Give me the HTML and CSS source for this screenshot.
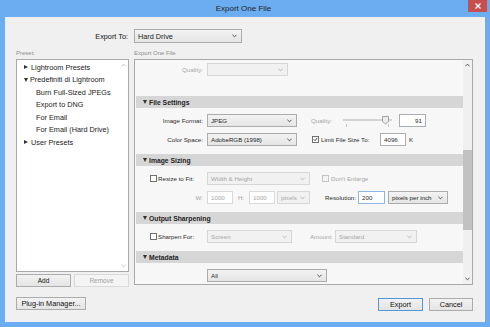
FILE: index.html
```html
<!DOCTYPE html>
<html lang="en">
<head>
    <meta charset="UTF-8">
    <title>Export One File</title>
    <link rel="stylesheet" href="styles.css">
</head>
<body>
    <div class="window">
        <div class="titlebar">
            <span class="title">Export One File</span>
            <span class="close">
                <svg width="6" height="6" viewBox="0 0 6 6"><path d="M0.5 0.5 L5.5 5.5 M5.5 0.5 L0.5 5.5" stroke="#fff" stroke-width="1.3"/></svg>
            </span>
        </div>

        <div class="client">
            <div class="export-to">
                <span class="export-label">Export To:</span>
                <div class="select select-dest">
                    <span>Hard Drive</span>
                    <svg class="caret" viewBox="0 0 6 4"><path d="M0.5 0.5 L3 3 L5.5 0.5"/></svg>
                </div>
            </div>

            <div class="captions">
                <span class="caption-preset">Preset:</span>
                <span>Export One File</span>
            </div>

            <div class="main">
                <!-- presets -->
                <div class="presets">
                    <div class="preset-list">
                        <div class="tree">
                            <div class="tree-row"><span class="tri-right"></span>Lightroom Presets</div>
                            <div class="tree-row"><span class="tri-down"></span>Predefiniti di Lightroom</div>
                            <div class="tree-row tree-leaf">Burn Full-Sized JPEGs</div>
                            <div class="tree-row tree-leaf">Export to DNG</div>
                            <div class="tree-row tree-leaf">For Email</div>
                            <div class="tree-row tree-leaf">For Email (Hard Drive)</div>
                            <div class="tree-row"><span class="tri-right"></span>User Presets</div>
                        </div>
                        <div class="vscroll vscroll-list">
                            <div class="sb-arrow"><svg viewBox="0 0 6 4"><path d="M0.5 3.5 L3 1 L5.5 3.5"/></svg></div>
                            <div class="sb-track"></div>
                            <div class="sb-arrow"><svg viewBox="0 0 6 4"><path d="M0.5 0.5 L3 3 L5.5 0.5"/></svg></div>
                        </div>
                    </div>
                    <div class="preset-buttons">
                        <button class="btn">Add</button>
                        <button class="btn btn-off">Remove</button>
                    </div>
                </div>

                <!-- settings panel -->
                <div class="panel">
                    <div class="panel-body">
                        <div class="row">
                            <span class="label off">Quality:</span>
                            <div class="select off sel-quality"><span></span><svg class="caret" viewBox="0 0 6 4"><path d="M0.5 0.5 L3 3 L5.5 0.5"/></svg></div>
                        </div>

                        <div class="sect sect-first"><span class="tri-down"></span>File Settings</div>
                        <div class="row">
                            <span class="label">Image Format:</span>
                            <div class="select sel-format"><span>JPEG</span><svg class="caret" viewBox="0 0 6 4"><path d="M0.5 0.5 L3 3 L5.5 0.5"/></svg></div>
                            <span class="side-label off quality-label">Quality:</span>
                            <svg class="slider" width="49" height="12" viewBox="0 0 49 12">
                                <rect x="0" y="4" width="49" height="2" fill="#d4d4d4"/>
                                <path d="M3.5 9 V12 M45.5 9 V12" stroke="#c4c4c4"/>
                                <path d="M39.5 1.5 H45.5 V6.5 L42.5 9 L39.5 6.5 Z" fill="#ececec" stroke="#a2a2a2"/>
                            </svg>
                            <div class="input input-quality">91</div>
                        </div>
                        <div class="row">
                            <span class="label">Color Space:</span>
                            <div class="select sel-format"><span>AdobeRGB (1998)</span><svg class="caret" viewBox="0 0 6 4"><path d="M0.5 0.5 L3 3 L5.5 0.5"/></svg></div>
                            <span class="check checked limit-check">
                                <svg viewBox="0 0 7 7"><path d="M1.2 3.4 L2.9 5.2 L5.9 1.3" fill="none" stroke="#222" stroke-width="1.2"/></svg>
                            </span>
                            <span class="limit-label">Limit File Size To:</span>
                            <div class="input input-size">4096</div>
                            <span class="unit">K</span>
                        </div>

                        <div class="sect"><span class="tri-down"></span>Image Sizing</div>
                        <div class="row">
                            <span class="label label-check"><span class="check"></span>Resize to Fit:</span>
                            <div class="select off sel-resize"><span>Width &amp; Height</span><svg class="caret" viewBox="0 0 6 4"><path d="M0.5 0.5 L3 3 L5.5 0.5"/></svg></div>
                            <span class="check off enlarge-check"></span>
                            <span class="off enlarge-label">Don't Enlarge</span>
                        </div>
                        <div class="row">
                            <span class="label off">W:</span>
                            <div class="input off input-dim">1000</div>
                            <span class="off h-label">H:</span>
                            <div class="input off input-dim">1000</div>
                            <div class="select off sel-units"><span>pixels</span><svg class="caret" viewBox="0 0 6 4"><path d="M0.5 0.5 L3 3 L5.5 0.5"/></svg></div>
                            <span class="side-label res-label">Resolution:</span>
                            <div class="input input-res">200</div>
                            <div class="select sel-ppi"><span>pixels per inch</span><svg class="caret" viewBox="0 0 6 4"><path d="M0.5 0.5 L3 3 L5.5 0.5"/></svg></div>
                        </div>

                        <div class="sect"><span class="tri-down"></span>Output Sharpening</div>
                        <div class="row">
                            <span class="label label-check"><span class="check"></span>Sharpen For:</span>
                            <div class="select off sel-sharpen"><span>Screen</span><svg class="caret" viewBox="0 0 6 4"><path d="M0.5 0.5 L3 3 L5.5 0.5"/></svg></div>
                            <span class="side-label off amount-label">Amount:</span>
                            <div class="select off sel-amount"><span>Standard</span><svg class="caret" viewBox="0 0 6 4"><path d="M0.5 0.5 L3 3 L5.5 0.5"/></svg></div>
                        </div>

                        <div class="sect"><span class="tri-down"></span>Metadata</div>
                        <div class="row">
                            <span class="label"></span>
                            <div class="select sel-meta"><span>All</span><svg class="caret" viewBox="0 0 6 4"><path d="M0.5 0.5 L3 3 L5.5 0.5"/></svg></div>
                        </div>
                    </div>
                    <div class="vscroll vscroll-panel">
                        <div class="sb-arrow"><svg viewBox="0 0 6 4"><path d="M0.5 3.5 L3 1 L5.5 3.5"/></svg></div>
                        <div class="sb-track"><div class="sb-thumb"></div></div>
                        <div class="sb-arrow"><svg viewBox="0 0 6 4"><path d="M0.5 0.5 L3 3 L5.5 0.5"/></svg></div>
                    </div>
                </div>
            </div>

            <div class="footer">
                <button class="btn btn-plugin">Plug-in Manager...</button>
                <div class="footer-right">
                    <button class="btn btn-default btn-export">Export</button>
                    <button class="btn btn-cancel">Cancel</button>
                </div>
            </div>
        </div>
    </div>
</body>
</html>
```

FILE: styles.css
```css
* {
    box-sizing: border-box;
}

html, body {
    margin: 0;
}

body {
    width: 490px;
    height: 327px;
    overflow: hidden;
    font-family: "Liberation Sans", Arial, sans-serif;
    color: #222;
}

.window {
    width: 490px;
    height: 327px;
    background: #6cacf0;
    display: flex;
    flex-direction: column;
}

/* title bar */
.titlebar {
    height: 17px;
    display: grid;
    grid-template-columns: 1fr auto 1fr;
    align-items: start;
    padding-right: 3px;
}

.title {
    grid-column: 2;
    font-size: 8px;
    line-height: 18px;
    color: #1f1f1f;
}

.close {
    grid-column: 3;
    justify-self: end;
    width: 19px;
    height: 12px;
    background: #c7504f;
    display: flex;
    align-items: center;
    justify-content: center;
}

.close svg {
    display: block;
}

/* client area */
.client {
    flex: 1;
    margin: 0 5px 5px;
    background: #f0f0f0;
    padding: 12px 12px 11px 11px;
    display: flex;
    flex-direction: column;
}

.export-to {
    display: flex;
    align-items: center;
    height: 14px;
}

.export-label {
    width: 112px;
    margin-right: 6px;
    text-align: right;
    font-size: 7.3px;
    color: #111;
}

.captions {
    display: flex;
    align-items: center;
    height: 12px;
    margin-top: 2px;
    padding-top: 3px;
    font-size: 6px;
    color: #8c8c8c;
}

.caption-preset {
    width: 118px;
}

.main {
    display: flex;
    gap: 5px;
    height: 226px;
    margin-top: 2px;
}

/* preset list */
.presets {
    width: 113px;
    display: flex;
    flex-direction: column;
}

.preset-list {
    height: 213px;
    background: #fff;
    border: 1px solid #a9a9a9;
    display: flex;
}

.tree {
    flex: 1;
    padding: 1px 0 0 7px;
    font-size: 7.3px;
    color: #1a1a1a;
}

.tree-row {
    height: 12.5px;
    display: flex;
    align-items: center;
    white-space: nowrap;
}

.tree-leaf {
    padding-left: 12px;
}

.tri-right {
    width: 0;
    height: 0;
    border-left: 4px solid #333;
    border-top: 2.5px solid transparent;
    border-bottom: 2.5px solid transparent;
    margin: 0 3px 0 0;
}

.tri-down {
    width: 0;
    height: 0;
    border-top: 4px solid #333;
    border-left: 2.5px solid transparent;
    border-right: 2.5px solid transparent;
    margin-right: 2px;
}

.preset-buttons {
    display: flex;
    gap: 3px;
    height: 11px;
    margin-top: 2px;
}

.preset-buttons .btn {
    flex: 1;
    font-size: 6.5px;
}

/* buttons */
.btn {
    height: 13px;
    padding: 0;
    border: 1px solid #acacac;
    background: linear-gradient(#f2f2f2, #e4e4e4);
    font-family: inherit;
    font-size: 7.3px;
    color: #111;
    display: flex;
    align-items: center;
    justify-content: center;
}

.btn-off {
    background: #f4f4f4;
    border-color: #d9d9d9;
    color: #a3a3a3;
}

.btn-default {
    border-color: #4f97d9;
}

.footer {
    display: flex;
    align-items: flex-start;
    height: 14px;
    margin-top: 12px;
}

.btn-plugin {
    width: 70px;
}

.footer-right {
    display: flex;
    gap: 6px;
    margin-left: auto;
    margin-top: 1px;
}

.btn-export {
    width: 45px;
}

.btn-cancel {
    width: 44px;
}

/* settings panel */
.panel {
    width: 339px;
    border: 1px solid #a9a9a9;
    background: #f7f7f7;
    display: flex;
    overflow: hidden;
}

.panel-body {
    flex: 1;
    padding: 3px 0 0 1px;
    display: flex;
    flex-direction: column;
    font-size: 6.2px;
    color: #2b2b2b;
}

.row {
    display: flex;
    align-items: center;
    height: 13px;
    flex-shrink: 0;
    white-space: nowrap;
}

.row + .row {
    margin-top: 6px;
}

.sect {
    height: 12px;
    margin: 8px 0 6px;
    padding-left: 7px;
    background: #d6d6d6;
    display: flex;
    align-items: center;
    flex-shrink: 0;
    font-size: 6.8px;
    font-weight: bold;
    color: #1e1e1e;
}

.sect-first {
    margin-top: 20px;
}

.label {
    width: 71px;
    padding-right: 4px;
    text-align: right;
    flex-shrink: 0;
}

.label-check {
    display: flex;
    align-items: center;
    padding-left: 14px;
    text-align: left;
}

.label-check .check {
    margin-right: 1px;
}

.off {
    color: #a6a6a6;
}

.side-label {
    text-align: right;
    flex-shrink: 0;
}

/* drop-downs and fields */
.select {
    height: 13px;
    border: 1px solid #acacac;
    background: linear-gradient(#f3f3f3, #e5e5e5);
    padding: 0 4px 0 3px;
    display: flex;
    align-items: center;
    justify-content: space-between;
    flex-shrink: 0;
    color: #1e1e1e;
}

.select.off {
    background: #f1f1f1;
    border-color: #d6d6d6;
    color: #a6a6a6;
}

.caret {
    width: 5px;
    height: 4px;
    fill: none;
    stroke: #444;
    stroke-width: 1.1;
}

.select.off .caret {
    stroke: #b4b4b4;
}

.select-dest {
    width: 108px;
    height: 14px;
    font-size: 7.3px;
}

.input {
    height: 13px;
    border: 1px solid #abadb3;
    background: #fff;
    padding: 0 3px;
    display: flex;
    align-items: center;
    flex-shrink: 0;
}

.input.off {
    border-color: #d9d9d9;
}

.check {
    width: 7px;
    height: 7px;
    border: 1px solid #707070;
    background: #fff;
    flex-shrink: 0;
    display: flex;
}

.check svg {
    width: 5px;
    height: 5px;
}

.check.off {
    border-color: #c4c4c4;
    background: #f4f4f4;
}

.sel-quality { width: 81px; }
.sel-format { width: 90px; }

.quality-label {
    width: 35px;
}

.slider {
    margin-left: 11px;
    flex-shrink: 0;
}

.input-quality {
    width: 27px;
    margin-left: 7px;
    justify-content: flex-end;
}

.limit-check {
    margin-left: 15px;
}

.limit-label {
    width: 59px;
    margin-left: 2px;
}

.input-size { width: 26px; }

.unit {
    margin-left: 3px;
}

.sel-resize { width: 103px; }

.enlarge-check {
    margin-left: 12px;
}

.enlarge-label {
    margin-left: 2px;
}

.input-dim { width: 26px; }

.h-label {
    width: 11px;
    margin-left: 5px;
}

.sel-units {
    width: 33px;
    margin-left: 2px;
}

.res-label {
    width: 48px;
    padding-right: 2px;
}

.input-res {
    width: 27px;
    border-color: #8fb6e0;
}

.sel-ppi {
    width: 60px;
    margin-left: 3px;
}

.sel-sharpen { width: 85px; }

.amount-label {
    width: 43px;
    padding-right: 2px;
}

.sel-amount {
    width: 82px;
}

.sel-meta { width: 120px; }

/* scroll bars */
.vscroll {
    display: flex;
    flex-direction: column;
    flex-shrink: 0;
}

.vscroll-list {
    width: 10px;
}

.vscroll-panel {
    width: 9px;
    background: #f0f0f0;
}

.sb-arrow {
    height: 10px;
    display: flex;
    align-items: center;
    justify-content: center;
}

.sb-arrow svg {
    width: 5px;
    height: 4px;
    fill: none;
    stroke: #505050;
    stroke-width: 1.2;
}

.vscroll-list .sb-arrow svg {
    stroke: #c2c2c2;
}

.sb-track {
    flex: 1;
}

.sb-thumb {
    height: 80px;
    margin-top: 80px;
    background: #c2c2c2;
}
```
